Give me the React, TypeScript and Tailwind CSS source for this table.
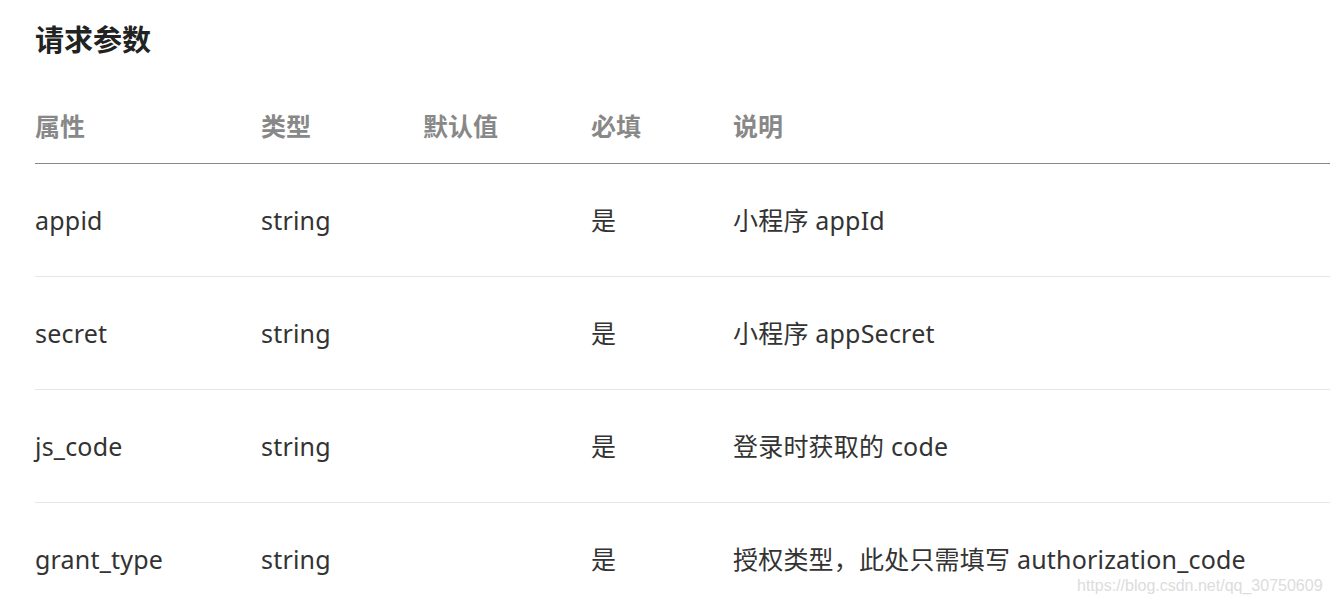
import React from "react";

const rows = [
  ["appid", "string", "", "是", "小程序 appId"],
  ["secret", "string", "", "是", "小程序 appSecret"],
  ["js_code", "string", "", "是", "登录时获取的 code"],
  ["grant_type", "string", "", "是", "授权类型，此处只需填写 authorization_code"],
];

const font = { fontFamily: '"Noto Sans", "Noto Sans CJK SC", sans-serif' };

export default function App() {
  return (
    <div className="relative w-[1330px] h-[606px] overflow-hidden bg-white pl-[35px]" style={font}>
      <h2 className="pt-[20px] h-[60px] leading-[40px] text-[29px] font-bold text-[#222]">请求参数</h2>
      <table className="mt-[30px] w-[1295px] table-fixed border-collapse">
        <colgroup>
          <col className="w-[226px]" />
          <col className="w-[162px]" />
          <col className="w-[168px]" />
          <col className="w-[142px]" />
          <col />
        </colgroup>
        <thead>
          <tr className="h-[73px] border-b border-[#888]">
            {["属性", "类型", "默认值", "必填", "说明"].map((h) => (
              <th key={h} className="p-0 text-left align-middle text-[25px] font-bold text-[#888] leading-none">
                {h}
              </th>
            ))}
          </tr>
        </thead>
        <tbody>
          {rows.map((r, i) => (
            <tr key={i} className="h-[113px] border-b border-[#e6e6e6]">
              {r.map((c, j) => (
                <td key={j} className="p-0 pt-[2px] text-left align-middle text-[25px] tracking-[0.2px] text-[#333] leading-none whitespace-nowrap">
                  {c}
                </td>
              ))}
            </tr>
          ))}
        </tbody>
      </table>
      <div
        className="absolute left-[1077px] top-[578px] text-[16px] text-[#dcdcdc] leading-none"
        style={{ fontFamily: '"Liberation Sans", Arial, sans-serif' }}
      >
        https://blog.csdn.net/qq_30750609
      </div>
    </div>
  );
}
